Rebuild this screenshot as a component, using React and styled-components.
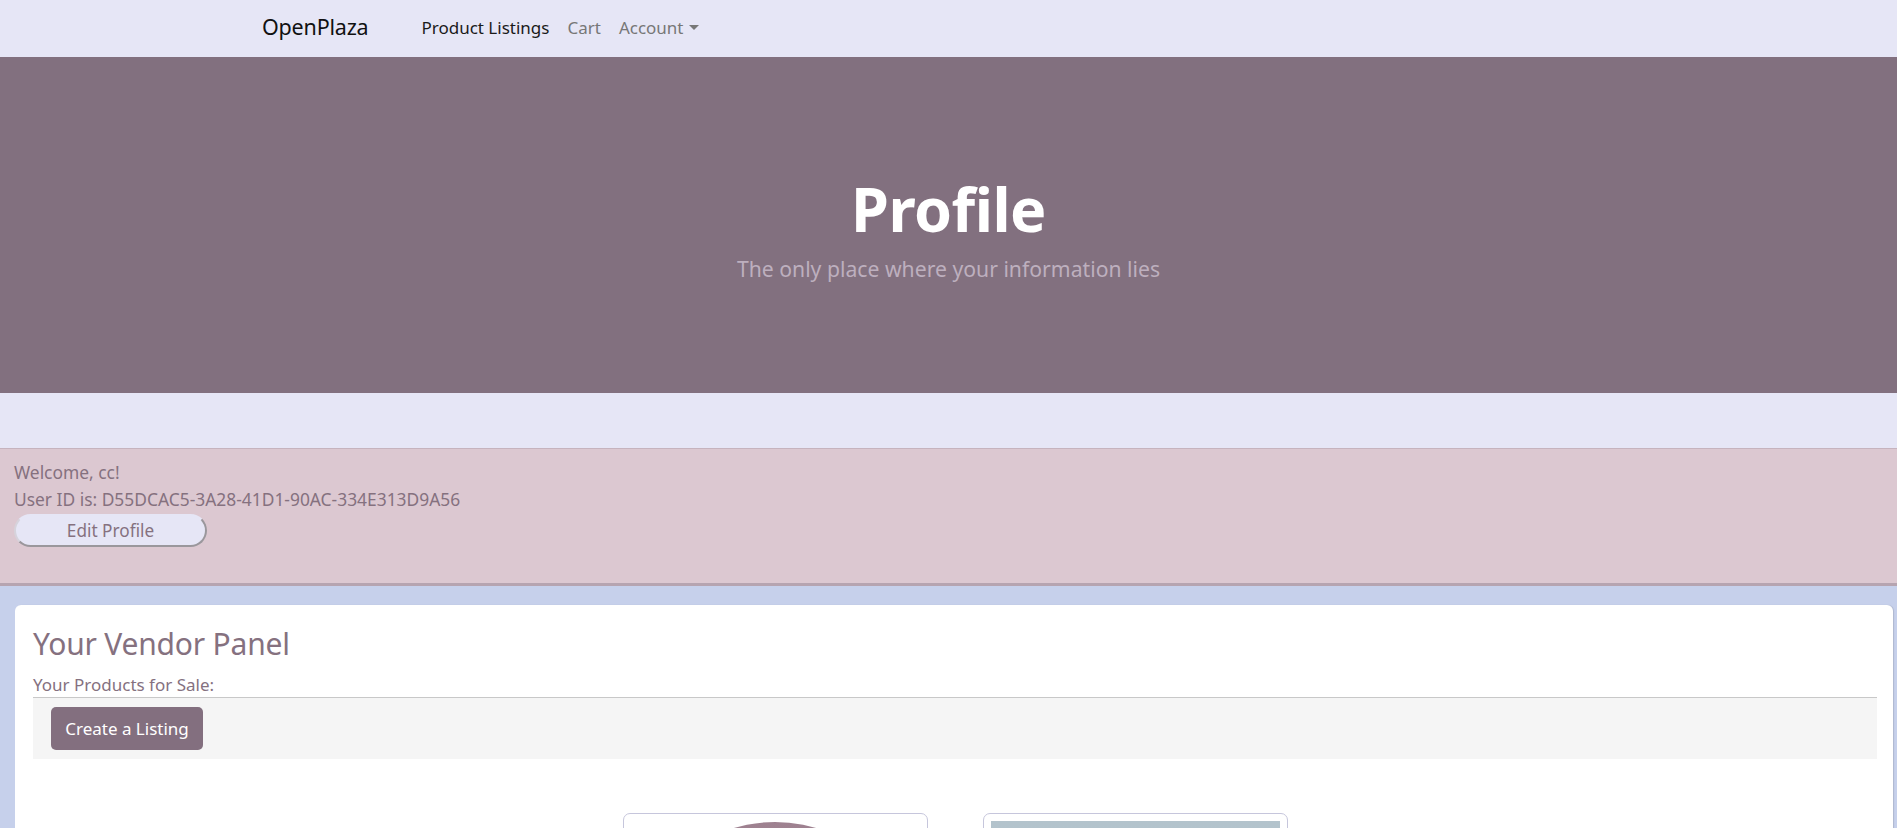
import React from "react";
import styled, { createGlobalStyle } from "styled-components";

const GlobalStyle = createGlobalStyle`
  html, body { margin: 0; padding: 0; }
  body {
    font-family: "Noto Sans", "Open Sans", sans-serif;
    font-size: 16px;
    line-height: 1.5;
    background: #c6d0eb;
    color: #212529;
  }
  * { box-sizing: border-box; }
`;

const NavBar = styled.nav`
  height: 57px;
  background: #e6e6f6;
  display: flex;
  align-items: center;
  padding-left: 262px;
  padding-bottom: 2px;
`;

const Brand = styled.a`
  font-size: 21.5px;
  color: #111;
  text-decoration: none;
  margin-right: 53px;
  letter-spacing: -0.2px;
`;

const NavLinks = styled.div`
  display: flex;
  align-items: center;
  gap: 18px;
`;

const NavLink = styled.a`
  font-size: 17px;
  color: ${(p) => (p.$active ? "#1a1a1a" : "#777")};
  text-decoration: none;
  display: inline-flex;
  align-items: center;
`;

const Caret = styled.span`
  display: inline-block;
  margin-left: 5px;
  width: 0;
  height: 0;
  border-left: 5px solid transparent;
  border-right: 5px solid transparent;
  border-top: 5px solid #777;
`;

const Hero = styled.header`
  height: 336px;
  background: #82707f;
  display: flex;
  flex-direction: column;
  align-items: center;
  justify-content: center;
  padding-top: 7px;
`;

const HeroTitle = styled.h1`
  margin: 0;
  font-size: 61px;
  font-weight: 700;
  color: #fff;
  line-height: 1.2;
  letter-spacing: -0.5px;
`;

const HeroLead = styled.p`
  margin: 8px 0 0;
  font-size: 21.2px;
  font-weight: 400;
  line-height: 1.5;
  color: #bdafbe;
`;

const Spacer = styled.div`
  height: 55px;
  background: #e6e6f6;
`;

const Welcome = styled.section`
  background: #dcc8d1;
  border-top: 1px solid #c6b3be;
  border-bottom: 3px solid #b6a4b0;
  height: 138px;
  padding: 10px 14px;
  color: #85717f;
  font-size: 17.4px;
`;

const InfoLine = styled.div`
  line-height: 27px;
`;

const PillButton = styled.button`
  width: 193px;
  height: 33px;
  border-radius: 17px;
  background: #e6e6f6;
  border: 2px solid;
  border-color: #e6e6f6 #9a979c #9a979c #d6d3dc;
  color: #85717f;
  font-family: inherit;
  font-size: 17.2px;
  padding: 0;
  margin-top: 1px;
`;

const VendorArea = styled.main`
  background: #c6d0eb;
  padding: 19px 4px 0 15px;
`;

const Card = styled.div`
  background: #fff;
  border-radius: 6px;
  padding: 20px 16px 40px 18px;
  min-height: 300px;
  box-shadow: 1px 0 1px rgba(0, 0, 0, 0.12);
`;

const CardTitle = styled.h2`
  margin: 0 0 10px;
  font-size: 30px;
  font-weight: 400;
  color: #85717f;
  line-height: 1.25;
  letter-spacing: -0.2px;
`;

const SubLabel = styled.div`
  font-size: 17px;
  color: #85717f;
  line-height: 24px;
  border-bottom: 1px solid #c8c8c8;
`;

const Toolbar = styled.div`
  background: #f5f5f5;
  padding: 9px 18px;
`;

const PrimaryButton = styled.button`
  background: #836f7f;
  color: #fff;
  border: none;
  border-radius: 5px;
  height: 43px;
  width: 152px;
  font-family: inherit;
  font-size: 17px;
  padding: 0;
`;

const ProductRow = styled.div`
  display: flex;
  justify-content: center;
  gap: 55px;
  margin-top: 54px;
`;

const ProductCard = styled.div`
  width: 305px;
  height: 320px;
  border: 1px solid #c6c6dc;
  border-radius: 7px;
  padding: 7px;
  display: flex;
  justify-content: center;
`;

const RoundImage = styled.div`
  width: 288px;
  height: 288px;
  border-radius: 50%;
  margin-top: 1px;
  background: radial-gradient(circle at 50% 40%, #b79aa8 0%, #9c7f8e 55%, #7e6472 100%);
`;

const RectImage = styled.div`
  width: 100%;
  height: 230px;
  background: linear-gradient(180deg, #b3c3cc 0%, #b7c6cf 100%);
`;

export default function App() {
  return (
    <>
      <GlobalStyle />
      <NavBar>
        <Brand href="#">OpenPlaza</Brand>
        <NavLinks>
          <NavLink $active href="#">Product Listings</NavLink>
          <NavLink href="#">Cart</NavLink>
          <NavLink href="#">
            Account
            <Caret />
          </NavLink>
        </NavLinks>
      </NavBar>
      <Hero>
        <HeroTitle>Profile</HeroTitle>
        <HeroLead>The only place where your information lies</HeroLead>
      </Hero>
      <Spacer />
      <Welcome>
        <InfoLine>Welcome, cc!</InfoLine>
        <InfoLine>User ID is: D55DCAC5-3A28-41D1-90AC-334E313D9A56</InfoLine>
        <PillButton>Edit Profile</PillButton>
      </Welcome>
      <VendorArea>
        <Card>
          <CardTitle>Your Vendor Panel</CardTitle>
          <SubLabel>Your Products for Sale:</SubLabel>
          <Toolbar>
            <PrimaryButton>Create a Listing</PrimaryButton>
          </Toolbar>
          <ProductRow>
            <ProductCard>
              <RoundImage />
            </ProductCard>
            <ProductCard>
              <RectImage />
            </ProductCard>
          </ProductRow>
        </Card>
      </VendorArea>
    </>
  );
}
